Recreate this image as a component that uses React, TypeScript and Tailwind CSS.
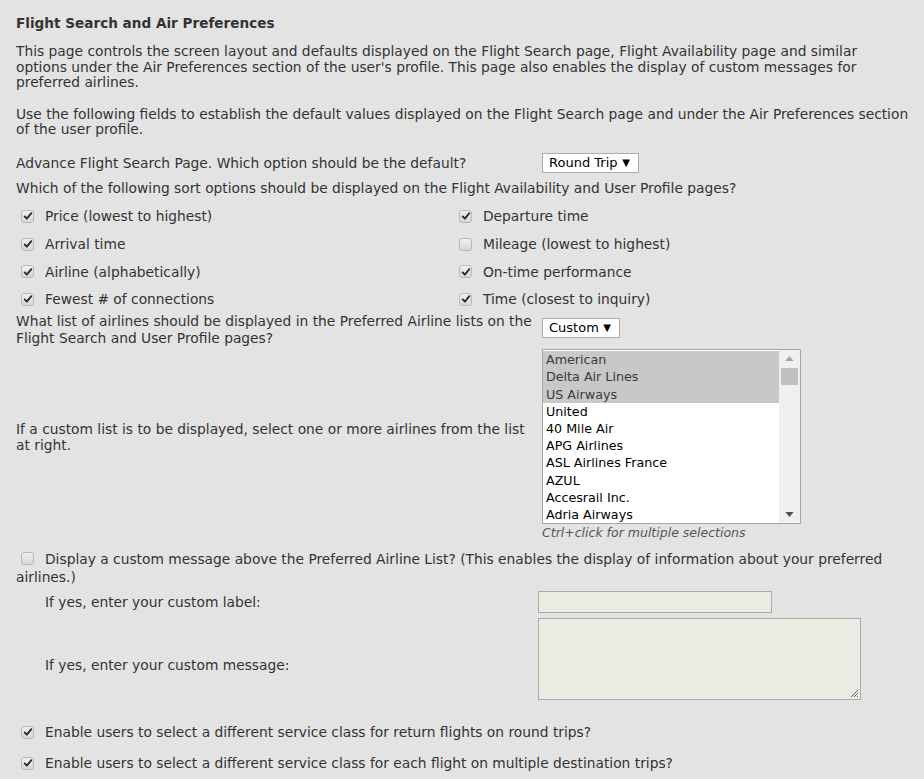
import React from "react";

const font = { fontFamily: '"DejaVu Sans", Verdana, sans-serif' };

function Check({ checked }: { checked: boolean }) {
  return (
    <span className="inline-flex h-[13px] w-[13px] shrink-0 items-center justify-center rounded-[3px] border border-[#b8b8b8] bg-gradient-to-b from-[#f0f0f0] to-[#d6d6d6]">
      {checked && (
        <svg viewBox="0 0 12 12" className="h-[10px] w-[10px]">
          <path d="M2 6.5 L4.6 9.2 L10 2.6" fill="none" stroke="#2a2a2a" strokeWidth="2.2" strokeLinecap="round" strokeLinejoin="round" />
        </svg>
      )}
    </span>
  );
}

function CheckRow({ checked, label }: { checked: boolean; label: string }) {
  return (
    <div className="flex h-[27.7px] items-center pl-[5px]">
      <Check checked={checked} />
      <span className="ml-[11px]">{label}</span>
    </div>
  );
}

function Dropdown({ value, width }: { value: string; width: string }) {
  return (
    <div className={`flex h-[20px] items-center justify-between border border-[#adadad] bg-white pl-[6px] pr-[8px] text-[13px] text-black ${width}`}>
      <span>{value}</span>
      <span className="text-[10px]">▼</span>
    </div>
  );
}

const airlines = [
  "American",
  "Delta Air Lines",
  "US Airways",
  "United",
  "40 Mile Air",
  "APG Airlines",
  "ASL Airlines France",
  "AZUL",
  "Accesrail Inc.",
  "Adria Airways",
];

export default function App() {
  return (
    <div className="min-h-screen bg-[#e3e3e3] pl-4 pr-[6px] pt-[15px] text-[13.8px] leading-[16px] text-[#333333]" style={font}>
      <h1 className="text-[13.6px] font-bold">Flight Search and Air Preferences</h1>

      <p className="mt-[13px] pr-[10px] leading-[15.5px]">
        This page controls the screen layout and defaults displayed on the Flight Search page, Flight Availability page and similar
        options under the Air Preferences section of the user's profile. This page also enables the display of custom messages for
        preferred airlines.
      </p>

      <p className="mt-[16px] leading-[15.5px]">
        Use the following fields to establish the default values displayed on the Flight Search page and under the Air Preferences section
        of the user profile.
      </p>

      <div className="mt-[15px] flex items-center">
        <span className="w-[526px]">Advance Flight Search Page. Which option should be the default?</span>
        <Dropdown value="Round Trip" width="w-[97px]" />
      </div>

      <p className="mt-[7px]">Which of the following sort options should be displayed on the Flight Availability and User Profile pages?</p>

      <div className="mt-[7px] grid grid-cols-[438px_1fr]">
        <CheckRow checked label="Price (lowest to highest)" />
        <CheckRow checked label="Departure time" />
        <CheckRow checked label="Arrival time" />
        <CheckRow checked={false} label="Mileage (lowest to highest)" />
        <CheckRow checked label="Airline (alphabetically)" />
        <CheckRow checked label="On-time performance" />
        <CheckRow checked label="Fewest # of connections" />
        <CheckRow checked label="Time (closest to inquiry)" />
      </div>

      <div className="flex items-start">
        <span className="w-[526px] leading-[17px]">
          What list of airlines should be displayed in the Preferred Airline lists on the Flight Search and User Profile pages?
        </span>
        <div className="mt-[5px]">
          <Dropdown value="Custom" width="w-[78px]" />
        </div>
      </div>

      <div className="mt-[2px] flex items-center">
        <span className="w-[526px]">
          If a custom list is to be displayed, select one or more airlines from the list at right.
        </span>
        <div className="flex h-[175px] w-[259px] border border-[#a6a6a6] bg-white text-[12.7px] text-black">
          <div className="flex-1 pt-px">
            {airlines.map((a, i) => (
              <div key={a} className={`h-[17.2px] pl-[3px] leading-[17px] ${i < 3 ? "bg-[#c8c8c8] text-[#3a3a3a]" : ""}`}>
                {a}
              </div>
            ))}
          </div>
          <div className="flex w-[21px] flex-col items-center bg-[#f0f0f0]">
            <svg viewBox="0 0 10 6" className="mt-[6px] h-[5px] w-[9px]">
              <path d="M0 6 L5 0 L10 6 Z" fill="#a3a3a3" />
            </svg>
            <div className="mt-[7px] h-[17px] w-[17px] bg-[#c1c1c1]" />
            <div className="flex-1" />
            <svg viewBox="0 0 10 6" className="mb-[6px] h-[5px] w-[9px]">
              <path d="M0 0 L5 6 L10 0 Z" fill="#505050" />
            </svg>
          </div>
        </div>
      </div>
      <p className="ml-[526px] mt-px text-[12.5px] italic leading-[16px] text-[#555555]">Ctrl+click for multiple selections</p>

      <p className="mt-[9px] leading-[18px]">
        <span className="mr-[11px] ml-[5px] inline-flex align-[-1px]">
          <Check checked={false} />
        </span>
        Display a custom message above the Preferred Airline List? (This enables the display of information about your preferred
        airlines.)
      </p>

      <div className="mt-[5px] flex items-center">
        <span className="w-[522px] pl-[29px]">If yes, enter your custom label:</span>
        <div className="h-[22px] w-[234px] border border-[#a9a9a9] bg-[#ebebe4]" />
      </div>

      <div className="mt-[5px] flex items-start">
        <span className="w-[522px] pl-[29px] pt-[39px]">If yes, enter your custom message:</span>
        <div className="relative h-[82px] w-[323px] border border-[#a9a9a9] bg-[#ebebe4]">
          <svg viewBox="0 0 10 10" className="absolute bottom-[1px] right-[1px] h-[10px] w-[10px]">
            <path d="M2 9 L9 2 M5 9 L9 5 M8 9 L9 8" stroke="#666" strokeWidth="1" />
          </svg>
        </div>
      </div>

      <div className="mt-[18px]">
        <div className="flex h-[28px] items-center pl-[5px]">
          <Check checked />
          <span className="ml-[11px]">Enable users to select a different service class for return flights on round trips?</span>
        </div>
        <div className="mt-[3px] flex h-[28px] items-center pl-[5px]">
          <Check checked />
          <span className="ml-[11px]">Enable users to select a different service class for each flight on multiple destination trips?</span>
        </div>
      </div>
    </div>
  );
}
